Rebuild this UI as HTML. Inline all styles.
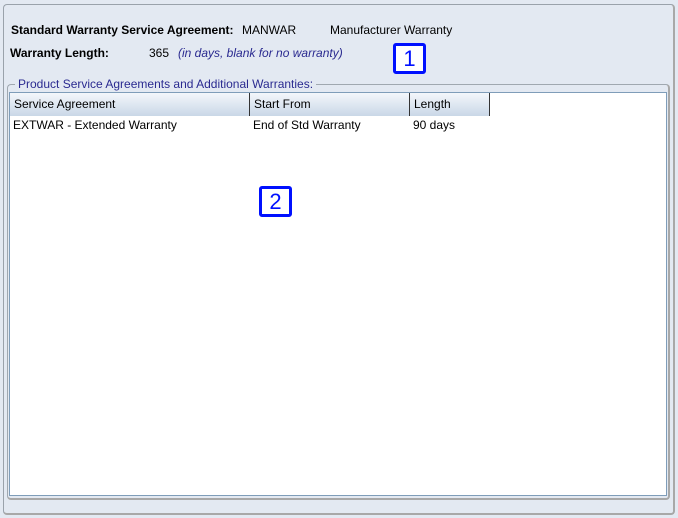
<!DOCTYPE html>
<html><head><style>
body{margin:0;width:678px;height:518px;background:#e3e9f2;font-family:"Liberation Sans",sans-serif;font-size:12px;color:#000;position:relative;overflow:hidden}
.a{position:absolute;white-space:nowrap}
.outer{position:absolute;left:3px;top:4px;width:669px;height:508px;border:1px solid #9aa2ab;border-right:2px solid #a8a8a8;border-bottom:2px solid #a8a8a8;border-radius:4px}
.grp{position:absolute;left:7px;top:84px;width:660px;height:413px;border:1px solid #a0a8b0;border-right:2px solid #a8a8a8;border-bottom:2px solid #a8a8a8;border-radius:4px}
.tbl{position:absolute;left:9px;top:92px;width:656px;height:402px;background:#fff;border:1px solid #7f9db9}
.hd{position:absolute;top:0;height:23px;background:linear-gradient(#f4f7fb,#c9d7e7);border-right:1px solid #333;box-sizing:border-box;padding:4px 0 0 4px}
.badge{position:absolute;width:27px;height:25px;border:3px solid #0010ff;border-radius:3px;background:#fff;color:#0010ff;font-size:22px;text-align:center;line-height:25px}
</style></head><body>
<div class="outer"></div>
<div class="a" style="left:11px;top:23px;font-weight:bold">Standard Warranty Service Agreement:</div>
<div class="a" style="left:242px;top:23px">MANWAR</div>
<div class="a" style="left:330px;top:23px">Manufacturer Warranty</div>
<div class="a" style="left:10px;top:46px;font-weight:bold">Warranty Length:</div>
<div class="a" style="left:149px;top:46px">365</div>
<div class="a" style="left:178px;top:46px;font-style:italic;color:#2a2a90">(in days, blank for no warranty)</div>
<div class="grp"></div>
<div class="a" style="left:15px;top:77px;background:#e3e9f2;padding:0 3px;color:#2a2a90">Product Service Agreements and Additional Warranties:</div>
<div class="tbl">
<div class="hd" style="left:0;width:240px">Service Agreement</div>
<div class="hd" style="left:240px;width:160px">Start From</div>
<div class="hd" style="left:400px;width:80px">Length</div>
<div class="a" style="left:3px;top:25px">EXTWAR - Extended Warranty</div>
<div class="a" style="left:243px;top:25px">End of Std Warranty</div>
<div class="a" style="left:403px;top:25px">90 days</div>
</div>
<div class="badge" style="left:393px;top:43px">1</div>
<div class="badge" style="left:259px;top:186px">2</div>
</body></html>
